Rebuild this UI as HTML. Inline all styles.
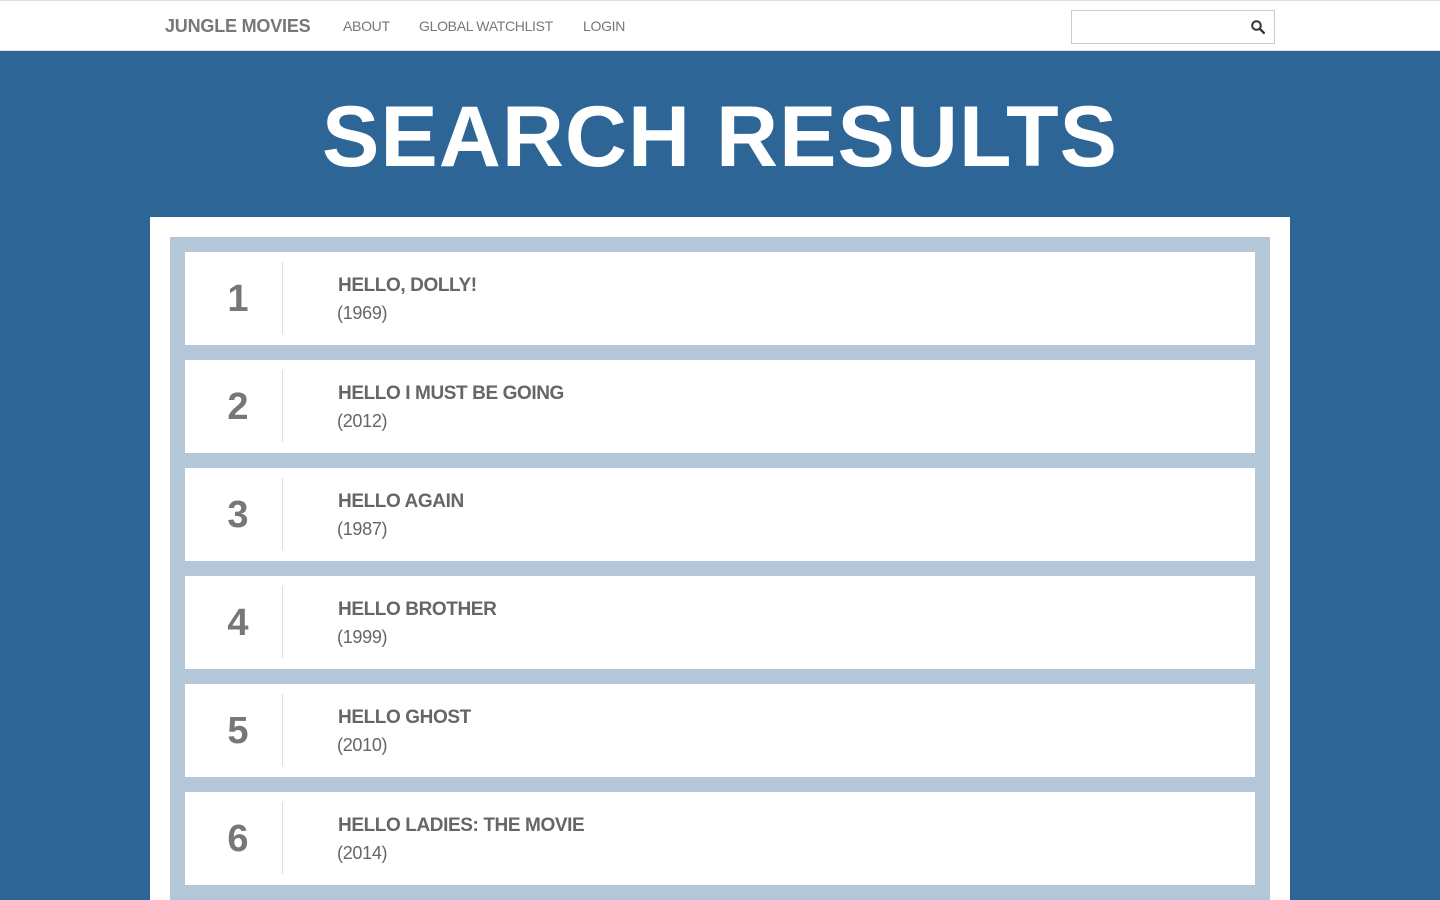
<!DOCTYPE html>
<html style="width:1440px;height:900px;overflow:hidden"><head><meta charset="utf-8"><style>
*{margin:0;padding:0;box-sizing:border-box}
body{width:1440px;height:900px;overflow:hidden;background:#2c6596;font-family:"Liberation Sans",Arial,sans-serif;position:relative}
.nav{position:absolute;left:0;top:0;width:1440px;height:51px;background:#fff;border-top:1px solid #ddd;border-bottom:1px solid #e0e0e0}
.brand{position:absolute;left:165px;top:15px;font-size:18px;font-weight:bold;color:#777;letter-spacing:-0.2px}
.nl{position:absolute;top:17px;font-size:14px;color:#777;letter-spacing:-0.3px}
.search{position:absolute;left:1071px;top:9px;width:204px;height:34px;border:1px solid #ccc}
.search svg{position:absolute;right:9px;top:9px}
h1{position:absolute;left:0;width:1440px;top:88px;text-align:center;color:#fff;font-size:86px;font-weight:bold;letter-spacing:1px}
.wrap{position:absolute;left:150px;top:217px;width:1140px;height:683px;background:#fff;overflow:hidden}
.inner{position:absolute;left:20px;top:20px;width:1100px;height:700px;background:#b3c7d9}
.row{position:absolute;left:15px;width:1070px;height:93px;background:#fff}
.num{position:absolute;left:4px;width:98px;top:26px;text-align:center;font-size:38px;font-weight:bold;color:#777}
.div{position:absolute;left:97px;top:10px;width:1px;height:72px;background:#ddd}
.t{position:absolute;left:153px;top:23px;font-size:19px;font-weight:bold;color:#666;letter-spacing:-0.4px}
.y{position:absolute;left:152px;top:51px;font-size:18px;color:#666;letter-spacing:-0.3px}
</style></head><body>
<div class="nav">
<div class="brand">JUNGLE MOVIES</div>
<div class="nl" style="left:343px">ABOUT</div>
<div class="nl" style="left:419px">GLOBAL WATCHLIST</div>
<div class="nl" style="left:583px">LOGIN</div>
<div class="search"><svg width="14" height="14" viewBox="0 0 14 14"><circle cx="5.5" cy="5.5" r="4.3" fill="none" stroke="#333" stroke-width="2"/><path d="M8.7 8.7L12.8 12.8" stroke="#333" stroke-width="2.4" stroke-linecap="round"/></svg></div>
</div>
<h1>SEARCH RESULTS</h1>
<div class="wrap"><div class="inner">
<div class="row" style="top:15px"><div class="num">1</div><div class="div"></div><div class="t">HELLO, DOLLY!</div><div class="y">(1969)</div></div>
<div class="row" style="top:123px"><div class="num">2</div><div class="div"></div><div class="t">HELLO I MUST BE GOING</div><div class="y">(2012)</div></div>
<div class="row" style="top:231px"><div class="num">3</div><div class="div"></div><div class="t">HELLO AGAIN</div><div class="y">(1987)</div></div>
<div class="row" style="top:339px"><div class="num">4</div><div class="div"></div><div class="t">HELLO BROTHER</div><div class="y">(1999)</div></div>
<div class="row" style="top:447px"><div class="num">5</div><div class="div"></div><div class="t">HELLO GHOST</div><div class="y">(2010)</div></div>
<div class="row" style="top:555px"><div class="num">6</div><div class="div"></div><div class="t">HELLO LADIES: THE MOVIE</div><div class="y">(2014)</div></div>
</div></div>
</body></html>
